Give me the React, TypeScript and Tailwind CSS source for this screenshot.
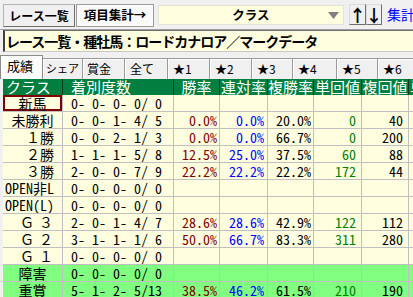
import React from "react";

type Row = {
  c: string;
  n: string;
  w?: string;
  r?: string;
  f?: string;
  t?: string;
  p?: string;
  green?: boolean;
  focus?: boolean;
  mode?: "center" | "left" | "num" | "g";
};

const rows: Row[] = [
  { c: "新馬", n: "0- 0- 0- 0/ 0", focus: true },
  { c: "未勝利", n: "0- 0- 1- 4/ 5", w: "0.0%", r: "0.0%", f: "20.0%", t: "0", p: "40" },
  { c: "１勝", n: "0- 0- 2- 1/ 3", w: "0.0%", r: "0.0%", f: "66.7%", t: "0", p: "200", mode: "num" },
  { c: "２勝", n: "1- 1- 1- 5/ 8", w: "12.5%", r: "25.0%", f: "37.5%", t: "60", p: "88", mode: "num" },
  { c: "３勝", n: "2- 0- 0- 7/ 9", w: "22.2%", r: "22.2%", f: "22.2%", t: "172", p: "44", mode: "num" },
  { c: "OPEN非L", n: "0- 0- 0- 0/ 0", mode: "left" },
  { c: "OPEN(L)", n: "0- 0- 0- 0/ 0", mode: "left" },
  { c: "Ｇ３", n: "2- 0- 1- 4/ 7", w: "28.6%", r: "28.6%", f: "42.9%", t: "122", p: "112", mode: "g" },
  { c: "Ｇ２", n: "3- 1- 1- 1/ 6", w: "50.0%", r: "66.7%", f: "83.3%", t: "311", p: "280", mode: "g" },
  { c: "Ｇ１", n: "0- 0- 0- 0/ 0", mode: "g" },
  { c: "障害", n: "0- 0- 0- 0/ 0", green: true },
  { c: "重賞", n: "5- 1- 2- 5/13", w: "38.5%", r: "46.2%", f: "61.5%", t: "210", p: "190", green: true },
];

const tabs = [
  { label: "成績", w: "w-[43px]", f: "" },
  { label: "シェア", w: "w-[40px]", f: "text-[11px] pl-[3px]" },
  { label: "賞金", w: "w-[42px]", f: "text-[12px] pl-[4px]" },
  { label: "全て", w: "w-[43px]", f: "text-[12px] pl-[5px]" },
  { label: "★1", w: "w-[42px]", f: "text-[12px] pl-[5px]" },
  { label: "★2", w: "w-[42px]", f: "text-[12px] pl-[5px]" },
  { label: "★3", w: "w-[41px]", f: "text-[12px] pl-[5px]" },
  { label: "★4", w: "w-[44px]", f: "text-[12px] pl-[5px]" },
  { label: "★5", w: "w-[41px]", f: "text-[12px] pl-[5px]" },
  { label: "★6", w: "w-[42px]", f: "text-[12px] pl-[5px]" },
];

const HW = "[font-feature-settings:'hwid']";

function ClassLabel({ row }: { row: Row }) {
  if (row.mode === "left") {
    return <span className={`block pl-[2px] text-left ${HW}`}>{row.c}</span>;
  }
  if (row.mode === "num") {
    return <span className="block pl-[23px] text-left">{row.c}</span>;
  }
  if (row.mode === "g") {
    return (
      <span className="flex pl-[17px]">
        <span>{row.c[0]}</span>
        <span className="ml-[5px]">{row.c[1]}</span>
      </span>
    );
  }
  return <span className="block text-center">{row.c}</span>;
}

export default function App() {
  return (
    <div className="w-[413px] h-[297px] overflow-hidden bg-[#f0f0f0] font-['Noto_Sans_CJK_JP',sans-serif] text-black">
      {/* top toolbar */}
      <div className="flex items-start h-[29px] pt-[4px] pl-[3px] whitespace-nowrap overflow-hidden">
        <div className="shrink-0 w-[72px] h-[23px] flex items-center justify-center bg-[#f0f0f0] border border-[#b4b4b4] border-r-[#6e6e6e] border-b-[#6e6e6e] text-[12px] font-bold leading-none">
          レース一覧
        </div>
        <div className="shrink-0 ml-[1px] w-[78px] h-[23px] flex items-center justify-center bg-[#fafafa] border border-[#9c9c9c] text-[12.5px] font-bold leading-none">
          項目集計→
        </div>
        <div className="shrink-0 relative ml-[4px] mt-[1px] w-[186px] h-[20px] flex items-center justify-center bg-[#ffffe0] border border-[#e4e4d4] text-[12.5px] font-bold leading-none">
          クラス
          <svg className="absolute right-[4px] top-[6px]" width="11" height="7" viewBox="0 0 11 7">
            <polygon points="0,0 11,0 5.5,7" fill="#808080" />
          </svg>
        </div>
        <div className="shrink-0 ml-[5px] flex">
          <div className="w-[17px] h-[21px] flex items-center justify-center bg-[#f0f0f0] border border-[#dcdcdc] border-r-[#6e6e6e] border-b-[#6e6e6e] text-[17px] font-bold leading-none">
            ↑
          </div>
          <div className="w-[16px] h-[21px] flex items-center justify-center bg-[#f0f0f0] border border-[#dcdcdc] border-r-[#6e6e6e] border-b-[#6e6e6e] text-[17px] font-bold leading-none">
            ↓
          </div>
        </div>
        <div className="shrink-0 ml-[5px] text-[14px] leading-[21px] text-[#0000ff]">集計表</div>
      </div>

      {/* title */}
      <div className="h-[24px] border-t border-[#a0a0a0]">
        <div className="ml-[3px] h-[22px] border-l-2 border-l-[#404040] border-t border-t-[#707070] border-b border-b-[#c8c8c8] bg-[#ffffe0] pl-[1px] text-[14px] font-bold tracking-[-1px] leading-[20px] whitespace-nowrap overflow-hidden">
          レース一覧・種牡馬：ロードカナロア／マークデータ
        </div>
      </div>

      {/* tabs */}
      <div className="flex items-end h-[26px] whitespace-nowrap overflow-hidden">
        {tabs.map((t, i) =>
          i === 0 ? (
            <div
              key={t.label}
              className={`${t.w} shrink-0 h-[24px] bg-[#fcfcfc] border-l border-t border-r border-[#8c8c8c] pl-[6px] text-[13px] leading-[19px]`}
            >
              {t.label}
            </div>
          ) : (
            <div
              key={t.label}
              className={`${t.w} ${t.f} shrink-0 h-[21px] bg-[#f0f0f0] border-t border-r border-[#9a9a9a] shadow-[inset_1px_1px_0_#ffffff] leading-[19px]`}
            >
              {t.label}
            </div>
          )
        )}
      </div>

      {/* table */}
      <div className="ml-[3px]">
        <div className="flex h-[16px] bg-[#007f40] text-white text-[15px] leading-[15px] whitespace-nowrap overflow-hidden">
          <div className="w-[60px] shrink-0 border-r border-[#0b3b1e] pl-[3px]">クラス</div>
          <div className="w-[111px] shrink-0 border-r border-[#0b3b1e] pl-[8px]">着別度数</div>
          <div className="w-[46px] shrink-0 border-r border-[#0b3b1e] text-center">勝率</div>
          <div className="w-[48px] shrink-0 border-r border-[#0b3b1e] text-center">連対率</div>
          <div className="w-[46px] shrink-0 border-r border-[#0b3b1e] text-center">複勝率</div>
          <div className="w-[48px] shrink-0 border-r border-[#0b3b1e] text-center">単回値</div>
          <div className="w-[47px] shrink-0 border-r border-[#0b3b1e] text-center">複回値</div>
          <div className="w-[20px] shrink-0 pl-[1px]">単</div>
        </div>
        {rows.map((row) => {
          const bg = row.green ? "bg-[#80ff80]" : "bg-[#ffffe0]";
          return (
            <div
              key={row.c}
              className={`flex h-[17px] border-b border-[#c0c0c0] ${bg} text-[14px] leading-[16px] whitespace-pre overflow-hidden`}
            >
              <div
                className={`w-[60px] shrink-0 border-r border-[#c0c0c0] ${
                  row.focus ? "shadow-[inset_0_0_0_2px_#800000]" : ""
                }`}
              >
                <ClassLabel row={row} />
              </div>
              <div className={`w-[111px] shrink-0 border-r border-[#c0c0c0] pl-[8px] ${HW}`}>{row.n}</div>
              <div className={`w-[46px] shrink-0 border-r border-[#c0c0c0] pr-[2px] text-right text-[#800000] ${HW}`}>
                {row.w ?? ""}
              </div>
              <div className={`w-[48px] shrink-0 border-r border-[#c0c0c0] pr-[3px] text-right text-[#0000ff] ${HW}`}>
                {row.r ?? ""}
              </div>
              <div className={`w-[46px] shrink-0 border-r border-[#c0c0c0] pr-[2px] text-right ${HW}`}>{row.f ?? ""}</div>
              <div className={`w-[48px] shrink-0 border-r border-[#c0c0c0] pr-[5px] text-right text-[#008000] ${HW}`}>
                {row.t ?? ""}
              </div>
              <div className={`w-[47px] shrink-0 border-r border-[#c0c0c0] pr-[5px] text-right ${HW}`}>{row.p ?? ""}</div>
              <div className="w-[20px] shrink-0"></div>
            </div>
          );
        })}
      </div>
    </div>
  );
}
